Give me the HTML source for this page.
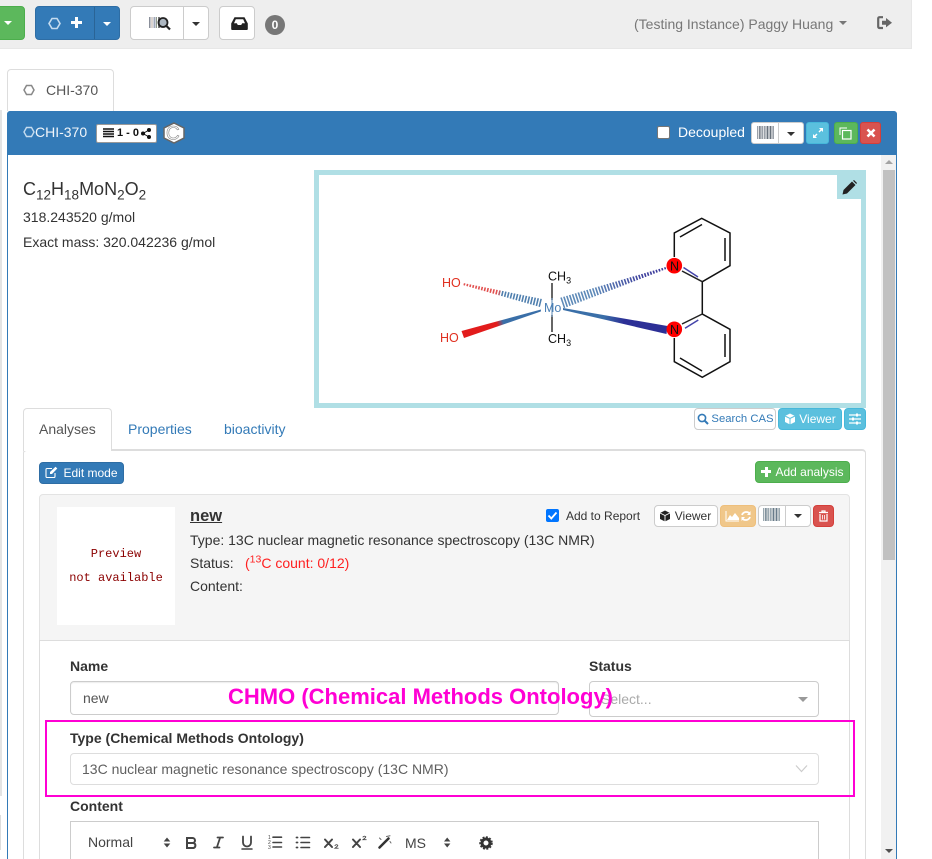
<!DOCTYPE html>
<html><head><meta charset="utf-8"><title>CHI-370</title>
<style>
*{box-sizing:border-box}
html,body{margin:0;padding:0;width:932px;height:859px;overflow:hidden;background:#fff}
body{position:relative;font-family:"Liberation Sans",sans-serif;font-size:14px;color:#333}
.a{position:absolute;white-space:nowrap}
.btn{position:absolute;border-radius:4px;border:1px solid #ccc;background:#fff}
.sm{font-size:12px;line-height:20px;text-align:center}
.info{background:#5bc0de;border-color:#46b8da;color:#fff}
svg{position:absolute;overflow:visible}
</style></head><body>

<div class="a" style="left:0;top:0;width:912px;height:49px;background:#eee;border-bottom:1px solid #e7e7e7;border-right:1px solid #e7e7e7"></div>

<div class="btn" style="left:-10px;top:6px;width:35px;height:34px;background:#5cb85c;border-color:#4cae4c"></div>
<div class="a" style="left:4px;top:21px;border-top:4px solid #fff;border-left:4px solid transparent;border-right:4px solid transparent"></div>

<div class="btn" style="left:35px;top:6px;width:85px;height:34px;background:#337ab7;border-color:#2e6da4"></div>
<div class="a" style="left:94px;top:7px;width:1px;height:32px;background:#2a6496"></div>
<svg style="left:48px;top:17px" width="13" height="13" viewBox="0 0 13 13"><path d="M4 1.500H9L12 6.500 9 11.500H4L1 6.500Z" fill="none" stroke="#c5dcef" stroke-width="1.600"/></svg>
<div class="a" style="left:71px;top:21px;width:11px;height:3px;background:#fff"></div>
<div class="a" style="left:75px;top:17px;width:3px;height:11px;background:#fff"></div>
<div class="a" style="left:103px;top:22px;border-top:4px solid #fff;border-left:4px solid transparent;border-right:4px solid transparent"></div>

<div class="btn" style="left:130px;top:6px;width:79px;height:34px"></div>
<div class="a" style="left:183px;top:7px;width:1px;height:32px;background:#ccc"></div>
<svg style="left:149px;top:16px" width="22" height="15" viewBox="0 0 22 15"><rect x="0" y="1" width="1.500" height="11" fill="#8a8f9a"/><rect x="2.500" y="1" width="1" height="11" fill="#b9a8a0"/><rect x="4.500" y="1" width="2" height="11" fill="#a0a8b8"/><rect x="7" y="1" width="1" height="11" fill="#8f9a8a"/><rect x="9" y="1" width="2" height="11" fill="#777"/><circle cx="14" cy="6.500" r="4.500" fill="#8a99a6" fill-opacity=".7" stroke="#222" stroke-width="1.800"/><path d="M17.500 10L21 13.500" stroke="#222" stroke-width="2.200"/></svg>
<div class="a" style="left:192px;top:22px;border-top:4px solid #333;border-left:4px solid transparent;border-right:4px solid transparent"></div>

<div class="btn" style="left:219px;top:6px;width:36px;height:34px"></div>
<svg style="left:231px;top:17px" width="17" height="13" viewBox="0 0 17 13"><path d="M3.500 .2H13.500L16.800 6.500V12A1 1 0 0 1 15.800 13H1.200A1 1 0 0 1 .2 12V6.500ZM4.800 2.300L3 6.300H5.800L6.800 8H10.200L11.200 6.300H14L12.200 2.300Z" fill="#222" fill-rule="evenodd"/></svg>
<div class="a" style="left:265px;top:15px;width:20px;height:20px;border-radius:10px;background:#777;color:#fff;font-weight:bold;font-size:12px;line-height:20px;text-align:center">0</div>

<div class="a" style="left:634px;top:14px;font-size:14px;line-height:20px;color:#777">(Testing Instance) Paggy Huang</div>
<div class="a" style="left:839px;top:21px;border-top:4px solid #777;border-left:4px solid transparent;border-right:4px solid transparent"></div>
<svg style="left:877px;top:16px" width="15" height="14" viewBox="0 0 15 14"><path d="M6 1.200H2.500A1.500 1.500 0 0 0 1.200 2.700V10.500A1.500 1.500 0 0 0 2.500 12H6" fill="none" stroke="#666" stroke-width="2.200"/><path d="M5 4.700H9V2L15 6.700 9 11.400V8.700H5Z" fill="#666"/></svg>

<div class="a" style="left:7px;top:69px;width:107px;height:42px;background:#fff;border:1px solid #ddd;border-bottom:none;border-radius:4px 4px 0 0"></div>
<svg style="left:23px;top:84px" width="12" height="12" viewBox="0 0 12 12"><path d="M3.500 1.500H8.500L11 6 8.500 10.500H3.500L1 6Z" fill="none" stroke="#888" stroke-width="1.500"/></svg>
<div class="a" style="left:46px;top:80px;line-height:20px;color:#555">CHI-370</div>

<div class="a" style="left:0;top:110px;width:2px;height:686px;background:#e4e4e4"></div>
<div class="a" style="left:0;top:815px;width:1px;height:35px;background:#ddd"></div>

<div class="a" style="left:7px;top:111px;width:890px;height:760px;border:1px solid #337ab7;background:#fff;border-radius:4px 4px 0 0"></div>
<div class="a" style="left:7px;top:111px;width:890px;height:44px;background:#337ab7;border-radius:3px 3px 0 0"></div>
<svg style="left:23px;top:126px" width="12" height="12" viewBox="0 0 12 12"><path d="M3.500 1.500H8.500L11 6 8.500 10.500H3.500L1 6Z" fill="none" stroke="#c5dcef" stroke-width="1.400"/></svg>
<div class="a" style="left:35px;top:122px;line-height:20px;color:#f0f5fa">CHI-370</div>
<div class="a" style="left:96px;top:124px;width:61px;height:19px;background:#fff;border:1px solid #999;border-radius:2px"></div>
<svg style="left:103px;top:128px" width="12" height="11" viewBox="0 0 12 11"><path d="M0 1H11M0 3.500H11M0 6H11M0 8.500H11" stroke="#111" stroke-width="1.600"/></svg>
<div class="a" style="left:117px;top:125px;font-size:11px;line-height:17px;font-weight:bold;color:#111">1 - 0</div>
<svg style="left:141px;top:128px" width="10" height="11" viewBox="0 0 10 11"><circle cx="2" cy="5.500" r="2" fill="#111"/><circle cx="8" cy="2" r="2" fill="#111"/><circle cx="8" cy="9" r="2" fill="#111"/><path d="M2 5.500L8 2M2 5.500L8 9" stroke="#111"/></svg>
<svg style="left:162px;top:122px" width="24" height="22" viewBox="0 0 24 22"><path d="M12 1L22 6V16L12 21 2 16V6Z" fill="#fff" stroke="#666" stroke-width="1.500"/><text x="4" y="17.500" font-family="Liberation Sans" font-size="19" fill="#fff" stroke="#888" stroke-width=".6">C</text></svg>

<div class="a" style="left:657px;top:126px;width:13px;height:13px;background:#fff;border:1px solid #767676;border-radius:2px"></div>
<div class="a" style="left:678px;top:122px;line-height:20px;color:#fff">Decoupled</div>
<div class="btn" style="left:751px;top:122px;width:53px;height:22px;border-radius:3px"></div>
<div class="a" style="left:778px;top:123px;width:1px;height:20px;background:#ccc"></div>
<svg style="left:757px;top:126px" width="17" height="13" viewBox="0 0 17 13"><rect width="17" height="13" fill="#9aa0a8"/><path d="M1.500 0V13M4 0V13M6.500 0V13M9 0V13M12 0V13M15 0V13" stroke="#f0f0f0" stroke-width=".8"/><path d="M3 0V13M10.500 0V13M13.500 0V13" stroke="#5c6670" stroke-width=".8"/></svg>
<div class="a" style="left:787px;top:132px;border-top:4px solid #333;border-left:4px solid transparent;border-right:4px solid transparent"></div>
<div class="btn" style="left:806px;top:122px;width:23px;height:22px;background:#5bc0de;border-color:#46b8da;border-radius:3px"></div>
<svg style="left:812px;top:127px" width="12" height="12" viewBox="0 0 12 12"><path d="M7 1H11V5L9.500 3.500 7.500 5.500 6.500 4.500 8.500 2.500ZM5 11H1V7L2.500 8.500 4.500 6.500 5.500 7.500 3.500 9.500Z" fill="#fff"/></svg>
<div class="btn" style="left:834px;top:122px;width:24px;height:22px;background:#5cb85c;border-color:#4cae4c;border-radius:3px"></div>
<svg style="left:839px;top:127px" width="13" height="13" viewBox="0 0 13 13"><path d="M1 8V1H8" fill="none" stroke="#fff" stroke-width="1"/><rect x="3.500" y="3.500" width="8.500" height="8.500" fill="none" stroke="#fff" stroke-width="1.200"/></svg>
<div class="btn" style="left:860px;top:122px;width:21px;height:22px;background:#d9534f;border-color:#d43f3a;border-radius:3px"></div>
<svg style="left:866px;top:128px" width="10" height="10" viewBox="0 0 10 10"><path d="M1.500 1.500L8.500 8.500M8.500 1.500L1.500 8.500" stroke="#fff" stroke-width="2.600"/></svg>

<div class="a" style="left:881px;top:155px;width:15px;height:704px;background:#f1f1f1"></div>
<div class="a" style="left:883px;top:170px;width:12px;height:390px;background:#c1c1c1"></div>
<div class="a" style="left:885px;top:160px;border-bottom:4px solid #a3a3a3;border-left:4px solid transparent;border-right:4px solid transparent"></div>
<div class="a" style="left:885px;top:849px;border-top:4px solid #505050;border-left:4px solid transparent;border-right:4px solid transparent"></div>

<div class="a" style="left:23px;top:177px;font-size:18px;line-height:24px;color:#333">C<sub style="font-size:13.500px;line-height:0">12</sub>H<sub style="font-size:13.500px;line-height:0">18</sub>MoN<sub style="font-size:13.500px;line-height:0">2</sub>O<sub style="font-size:13.500px;line-height:0">2</sub></div>
<div class="a" style="left:23px;top:207px;line-height:20px">318.243520 g/mol</div>
<div class="a" style="left:23px;top:232px;line-height:20px">Exact mass: 320.042236 g/mol</div>

<div class="a" style="left:314px;top:170px;width:552px;height:238px;border:5px solid #b0dfe5;background:#fff"></div>
<div class="a" style="left:837px;top:175px;width:25px;height:24px;background:#b0dfe5"></div>
<svg style="left:842px;top:180px" width="15" height="15" viewBox="0 0 15 15"><path d="M.5 14.500L1.500 10 10 1.500 13.500 5 5 13.500Z" fill="#222"/><path d="M11 .8L12 0 15 3 14.200 4Z" fill="#222"/></svg>

<svg style="left:0;top:0" width="932" height="859" viewBox="0 0 932 859">
<defs>
<linearGradient id="g1" gradientUnits="userSpaceOnUse" x1="565" y1="309" x2="667" y2="330"><stop offset=".38" stop-color="#3a6fa8"/><stop offset=".58" stop-color="#2c2f96"/></linearGradient>
<linearGradient id="g2" gradientUnits="userSpaceOnUse" x1="562" y1="303" x2="666" y2="268"><stop offset=".3" stop-color="#5e8ab8"/><stop offset=".8" stop-color="#3c3c9c"/></linearGradient>
<linearGradient id="g3" gradientUnits="userSpaceOnUse" x1="541" y1="303" x2="463" y2="284"><stop offset=".5" stop-color="#4f7fae"/><stop offset=".55" stop-color="#e2504f"/></linearGradient>
<linearGradient id="g4" gradientUnits="userSpaceOnUse" x1="541" y1="310" x2="462" y2="334"><stop offset=".48" stop-color="#3a6fa8"/><stop offset=".56" stop-color="#e21c1c"/></linearGradient>
<clipPath id="c1"><path d="M542 299L540 307 462.800 285 463.200 283Z"/></clipPath>
<clipPath id="c2"><path d="M560.200 297.800L563.800 308.200 666.300 269 665.700 267Z"/></clipPath>
</defs>
<g stroke="#111" stroke-width="1.500" fill="none">
<path d="M674.300 257V233L701.700 218.300 730 233V265.700L702.300 281.700V314L730 329.300V361.700L702.300 377.300 674.300 361.700V338"/>
<path d="M680 237L702 224.500M725 238V261M725 334V357M702 371L680 358"/>
<path d="M682 271L702.300 281.700M682 324L702.300 314" stroke="#222"/>
<path d="M683.500 267.500L698 277M685 328.300L698.300 320" stroke="#4444aa"/>
<path d="M552 283V300M552 315V332" stroke="#333"/>
<path d="M552 298V317" stroke="#5a87b5" stroke-width="1"/>
</g>
<path d="M541 303L463 284" stroke="url(#g3)" stroke-width="11" stroke-dasharray="1.600 1.400" fill="none" clip-path="url(#c1)"/>
<path d="M541 309.500L540.800 311.500 464 338 461.500 331Z" fill="url(#g4)"/>
<path d="M562 303L666 268" stroke="url(#g2)" stroke-width="12" stroke-dasharray="1.600 1.400" fill="none" clip-path="url(#c2)"/>
<path d="M563 308L563 310 666.500 334 667.500 326Z" fill="url(#g1)"/>
<circle cx="674.300" cy="265.700" r="7.800" fill="#f00"/>
<circle cx="674.300" cy="329.300" r="7.800" fill="#f00"/>
<g font-family="Liberation Sans" font-size="12.500">
<text x="670" y="270.500" fill="#111">N</text>
<text x="670" y="334" fill="#111">N</text>
<text x="442" y="287" fill="#e03020">HO</text>
<text x="440" y="342" fill="#e03020">HO</text>
<text x="544" y="312" fill="#4a7fb5">Mo</text>
<text x="548" y="280.500" fill="#111">CH<tspan font-size="9" dy="3">3</tspan></text>
<text x="548" y="343" fill="#111">CH<tspan font-size="9" dy="3">3</tspan></text>
</g>
</svg>

<div class="btn sm" style="left:694px;top:408px;width:82px;height:22px;color:#337ab7;font-size:11.300px;line-height:21px;padding-left:15px">Search CAS</div>
<svg style="left:697px;top:413px" width="12" height="12" viewBox="0 0 12 12"><circle cx="5" cy="5" r="3.600" fill="none" stroke="#337ab7" stroke-width="1.600"/><path d="M7.500 7.500L11 11" stroke="#337ab7" stroke-width="2"/></svg>
<div class="btn sm info" style="left:778px;top:408px;width:64px;height:22px;padding-left:15px">Viewer</div>
<svg style="left:784px;top:413px" width="12" height="12" viewBox="0 0 12 12"><path d="M6 .5L11 3V9L6 11.500 1 9V3Z" fill="#fff"/><path d="M1 3L6 5.500 11 3M6 5.500V11.500" stroke="#5bc0de" fill="none"/></svg>
<div class="btn info" style="left:844px;top:408px;width:22px;height:22px"></div>
<svg style="left:849px;top:413px" width="12" height="12" viewBox="0 0 12 12"><path d="M0 2H12M0 6H12M0 10H12" stroke="#fff" stroke-width="1.200"/><rect x="7" y=".5" width="2" height="3" fill="#fff"/><rect x="3" y="4.500" width="2" height="3" fill="#fff"/><rect x="7" y="8.500" width="2" height="3" fill="#fff"/></svg>

<div class="a" style="left:23px;top:449px;width:843px;height:420px;border:1px solid #ddd;border-top:2px solid #ddd;border-radius:4px 4px 0 0"></div>
<div class="a" style="left:23px;top:408px;width:89px;height:43px;background:#fff;border:1px solid #ddd;border-bottom:none;border-radius:4px 4px 0 0"></div>
<div class="a" style="left:39px;top:419px;line-height:20px;color:#555">Analyses</div>
<div class="a" style="left:128px;top:419px;line-height:20px;color:#337ab7">Properties</div>
<div class="a" style="left:224px;top:419px;line-height:20px;color:#337ab7">bioactivity</div>

<div class="btn sm" style="left:39px;top:462px;width:85px;height:22px;background:#337ab7;border-color:#2e6da4;color:#fff;padding-left:18px">Edit mode</div>
<svg style="left:45px;top:466px" width="13" height="13" viewBox="0 0 13 13"><path d="M10 7V10.500A1 1 0 0 1 9 11.500H2A1 1 0 0 1 1 10.500V3.500A1 1 0 0 1 2 2.500H7" fill="none" stroke="#fff" stroke-width="1.100"/><path d="M5 6L10.500 .8 12.300 2.500 7 8H5Z" fill="#fff"/></svg>
<div class="btn sm" style="left:755px;top:461px;width:95px;height:22px;background:#5cb85c;border-color:#4cae4c;color:#fff;padding-left:14px">Add analysis</div>
<div class="a" style="left:761px;top:470px;width:10px;height:3px;background:#fff"></div>
<div class="a" style="left:764.500px;top:466.500px;width:3px;height:10px;background:#fff"></div>

<div class="a" style="left:39px;top:494px;width:811px;height:147px;background:#f5f5f5;border:1px solid #e3e3e3;border-radius:4px 4px 0 0"></div>
<div class="a" style="left:39px;top:640px;width:811px;height:230px;border:1px solid #ddd;background:#fff"></div>
<div class="a" style="left:57px;top:507px;width:118px;height:118px;background:#fff"></div>
<div class="a" style="left:57px;top:542px;width:118px;text-align:center;font-family:'Liberation Mono','DejaVu Sans Mono',monospace;font-size:12px;line-height:24px;color:#8b0000">Preview<br>not available</div>
<div class="a" style="left:190px;top:505px;font-size:16.500px;line-height:22px;font-weight:bold;text-decoration:underline;color:#333">new</div>
<div class="a" style="left:190px;top:530px;line-height:20px">Type: 13C nuclear magnetic resonance spectroscopy (13C NMR)</div>
<div class="a" style="left:190px;top:553px;line-height:20px">Status:</div>
<div class="a" style="left:245px;top:553px;line-height:20px;color:#ff2020">(<sup style="font-size:10.500px;line-height:0">13</sup>C count: 0/12)</div>
<div class="a" style="left:190px;top:576px;line-height:20px">Content:</div>

<svg style="left:546px;top:509px" width="13" height="13" viewBox="0 0 13 13"><rect width="13" height="13" rx="2" fill="#0075ff"/><path d="M2.500 6.500L5.300 9.500 10.500 3.500" fill="none" stroke="#fff" stroke-width="1.800"/></svg>
<div class="a" style="left:566px;top:506px;font-size:12px;line-height:20px">Add to Report</div>
<div class="btn sm" style="left:654px;top:505px;width:64px;height:22px;padding-left:14px">Viewer</div>
<svg style="left:659px;top:510px" width="12" height="12" viewBox="0 0 12 12"><path d="M6 .5L11 3V9L6 11.500 1 9V3Z" fill="#222"/><path d="M1 3L6 5.500 11 3M6 5.500V11.500" stroke="#fff" stroke-width=".9" fill="none"/></svg>
<div class="btn" style="left:720px;top:505px;width:36px;height:22px;background:#f0c78a;border-color:#eebf7c"></div>
<svg style="left:725px;top:510px" width="27" height="12" viewBox="0 0 27 12"><path d="M1 1V11H14" fill="none" stroke="#fff"/><path d="M2 10L5 5 7 7 10 3 14 8V10Z" fill="#fff"/><path d="M17 5A4.500 4.500 0 0 1 25 4M25 7A4.500 4.500 0 0 1 17 8" fill="none" stroke="#fff" stroke-width="1.800"/><path d="M25.500 1V5H22ZM16.500 11V7H20Z" fill="#fff"/></svg>
<div class="btn" style="left:758px;top:505px;width:53px;height:22px"></div>
<div class="a" style="left:785px;top:506px;width:1px;height:20px;background:#ccc"></div>
<svg style="left:763px;top:508px" width="17" height="13" viewBox="0 0 17 13"><rect width="17" height="13" fill="#9aa8b0"/><path d="M1.500 0V13M4 0V13M6.500 0V13M9 0V13M12 0V13M15 0V13" stroke="#eee" stroke-width=".8"/><path d="M3 0V13M10.500 0V13M13.500 0V13" stroke="#5c7080" stroke-width=".8"/></svg>
<div class="a" style="left:794px;top:514px;border-top:4px solid #333;border-left:4px solid transparent;border-right:4px solid transparent"></div>
<div class="btn" style="left:813px;top:505px;width:21px;height:22px;background:#d9534f;border-color:#d43f3a"></div>
<svg style="left:818px;top:510px" width="11" height="12" viewBox="0 0 11 12"><path d="M1 2.500H10M4 2.500V1H7V2.500M2 4V11H9V4" fill="none" stroke="#fff" stroke-width="1.200"/><path d="M4.500 5V9.500M6.500 5V9.500" stroke="#fff" stroke-width=".8"/></svg>

<div class="a" style="left:70px;top:656px;line-height:20px;font-weight:bold">Name</div>
<div class="a" style="left:70px;top:681px;width:489px;height:34px;border:1px solid #ccc;border-radius:4px;background:#fff;box-shadow:inset 0 1px 1px rgba(0,0,0,.075);padding:6px 12px;line-height:20px;color:#555">new</div>
<div class="a" style="left:589px;top:656px;line-height:20px;font-weight:bold">Status</div>
<div class="a" style="left:589px;top:681px;width:230px;height:36px;border:1px solid #ccc;border-radius:4px;background:#fff;padding:7px 11px;line-height:20px;color:#aaa">Select...</div>
<div class="a" style="left:798px;top:697px;border-top:5px solid #999;border-left:5px solid transparent;border-right:5px solid transparent"></div>

<div class="a" style="left:228px;top:683px;font-size:22px;line-height:28px;font-weight:bold;color:#ff00d4">CHMO (Chemical Methods Ontology)</div>
<div class="a" style="left:45px;top:720px;width:810px;height:77px;border:2px solid #ff00d4"></div>

<div class="a" style="left:70px;top:728px;line-height:20px;font-weight:bold">Type (Chemical Methods Ontology)</div>
<div class="a" style="left:70px;top:753px;width:749px;height:32px;border:1px solid #ddd;border-radius:4px;background:#fff;padding:5px 11px;line-height:20px;color:#5f5f5f">13C nuclear magnetic resonance spectroscopy (13C NMR)</div>
<svg style="left:795px;top:764px" width="13" height="9" viewBox="0 0 13 9"><path d="M1 1.500L6.500 7.500 12 1.500" fill="none" stroke="#ccc" stroke-width="1.200"/></svg>

<div class="a" style="left:70px;top:796px;line-height:20px;font-weight:bold">Content</div>
<div class="a" style="left:70px;top:821px;width:749px;height:50px;border:1px solid #ccc"></div>
<div class="a" style="left:88px;top:832px;line-height:20px;color:#444">Normal</div>
<svg style="left:0;top:0" width="932" height="859" viewBox="0 0 932 859" fill="#444" stroke="none">
<path d="M163.700 841.500L167 837.500 170.300 841.500ZM163.700 843.500H170.300L167 847.500ZM444 841.500L447.200 837.500 450.400 841.500ZM444 843.500H450.400L447.200 847.500Z"/>
<g fill="none" stroke="#444" stroke-linecap="round">
<path d="M187 838H192.500A2.500 2.500 0 0 1 192.500 843H187ZM187 843H193.500A2.600 2.600 0 0 1 193.500 848H187Z" stroke-width="2"/>
<path d="M217.500 837.500H223M214 847.500H219.500M220 838L217 847" stroke-width="1.800"/>
<path d="M243 836.500V842.500A4 4 0 0 0 251 842.500V836.500" stroke-width="1.800"/>
<path d="M242 849H252" stroke-width="1.500"/>
<path d="M273 837.200H281.500M273 842.500H281.500M273 847H281.500M301 837.500H309.500M301 842.500H309.500M301 847.500H309.500" stroke-width="1.600"/>
<path d="M296.500 837.500H297.500M296.500 842.500H297.500M296.500 847.500H297.500" stroke-width="1.800"/>
<path d="M325 839.500L332 847M332 839.500L325 847M353 839.500L360 847M360 839.500L353 847" stroke-width="2"/>
<path d="M335 845.500Q336.500 844 337.800 845.300 338 846 335 848.200H338.200M363 837Q364.500 835.500 365.800 836.800 366 837.500 363 839.700H366.200" stroke-width=".9"/>
<path d="M379.500 847.500L388.500 838.500" stroke="#333" stroke-width="2.500"/>
<path d="M386.500 836.500L390 835.800M379.500 838L381 839.500M390 841.500L391 843" stroke="#666" stroke-width="1"/>
<circle cx="486" cy="843" r="4" stroke="#333" stroke-width="3"/><circle cx="486" cy="843" r="6" stroke="#333" stroke-width="1.500" stroke-dasharray="2 1.500" stroke-linecap="butt"/>
</g>
<g font-family="Liberation Sans" fill="#444">
<text x="268" y="839" font-size="5">1</text><text x="268" y="844" font-size="5">2</text><text x="268" y="849" font-size="5">3</text>
<text x="405" y="848" font-size="14">MS</text>
</g>
</svg>

</body></html>
